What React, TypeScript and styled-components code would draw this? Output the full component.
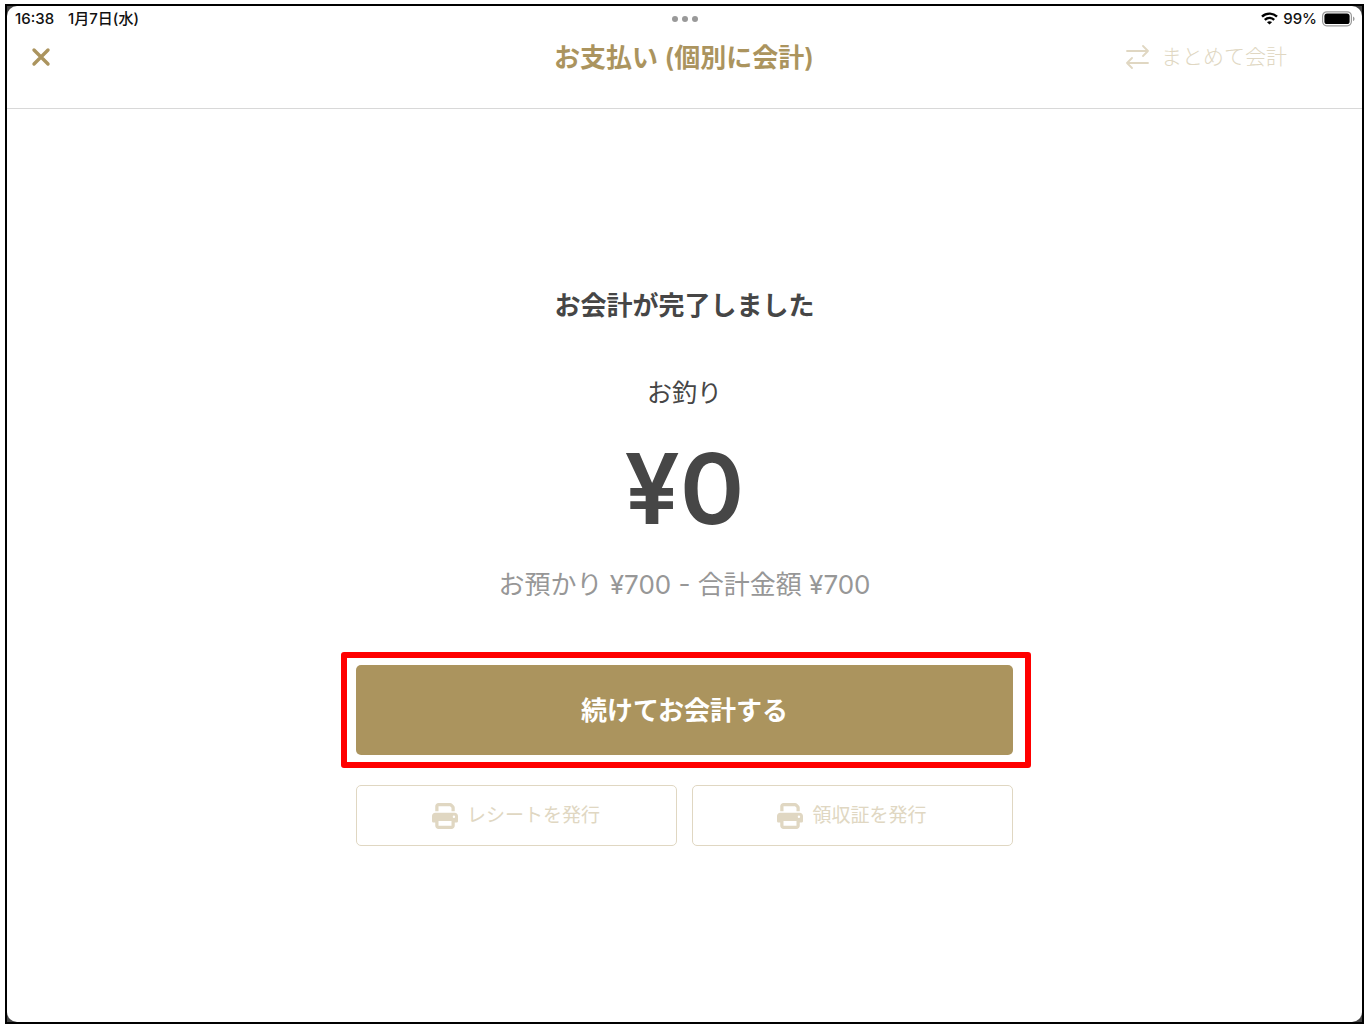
import React from "react";
import styled, { createGlobalStyle } from "styled-components";
import { FaPrint } from "react-icons/fa6";

const gold = "#ab945e";
const paleGold = "#e0d7c2";
const ink = "#464646";

const GlobalStyle = createGlobalStyle`
  *, *::before, *::after { box-sizing: border-box; }
  body {
    margin: 0;
    background: #fff;
    color: ${ink};
    font-family: Inter, "Noto Sans CJK JP", sans-serif;
  }
  button { font: inherit; cursor: pointer; }
  h1, h2, p { margin: 0; font-weight: 400; }
`;

const Page = styled.div`
  display: flex;
  min-height: 100vh;
  padding: 4px 7px 7px 5px;
`;

const Device = styled.div`
  flex: 1;
  display: flex;
  border: 2px solid #000;
  background: #444;
`;

const Screen = styled.div`
  flex: 1;
  display: flex;
  flex-direction: column;
  border-radius: 10px;
  background: #fff;
`;

const StatusBar = styled.div`
  display: grid;
  grid-template-columns: 1fr auto 1fr;
  align-items: center;
  height: 25px;
  padding: 0 7px 0 8px;
  color: #111;
  font-size: 15px;
  line-height: 24px;
  font-weight: 500;
`;

const StatusGroup = styled.div<{ $gap: number; $end?: boolean }>`
  display: flex;
  align-items: center;
  justify-content: ${(p) => (p.$end ? "flex-end" : "flex-start")};
  gap: ${(p) => p.$gap}px;
`;

const Dots = styled.div`
  display: flex;
  gap: 4px;
`;

const Dot = styled.span`
  width: 6px;
  height: 6px;
  border-radius: 50%;
  background: #999;
`;

const Header = styled.header`
  display: grid;
  grid-template-columns: 1fr auto 1fr;
  align-items: center;
  height: 78px;
  padding: 0 75px 25px 24px;
  border-bottom: 1px solid #d8d8d8;
`;

const CloseButton = styled.button`
  display: flex;
  justify-self: start;
  padding: 0;
  border: 0;
  background: none;
  color: ${gold};
`;

const Title = styled.h1`
  grid-column: 2;
  padding: 2px 0 0 50px;
  color: ${gold};
  font-size: 26px;
  line-height: 36px;
  font-weight: 600;
`;

const SwitchButton = styled.button`
  display: flex;
  justify-self: end;
  align-items: center;
  gap: 12px;
  padding: 0;
  border: 0;
  background: none;
  color: ${paleGold};
  font-size: 21px;
  line-height: 30px;
  font-weight: 300;
`;

const Main = styled.main`
  flex: 1;
  display: flex;
  flex-direction: column;
  align-items: center;
  padding: 179px 24px 48px;
  text-align: center;
`;

const Message = styled.h2`
  font-size: 26px;
  line-height: 36px;
  font-weight: 600;
`;

const ChangeLabel = styled.p`
  margin-top: 51px;
  font-size: 25px;
  line-height: 36px;
`;

const ChangeAmount = styled.p`
  margin-top: 24px;
  font-size: 98px;
  line-height: 108px;
  font-weight: 600;
`;

const Breakdown = styled.p`
  margin-top: 24px;
  color: #979797;
  font-size: 26px;
  line-height: 36px;
`;

const Actions = styled.div`
  display: flex;
  flex-direction: column;
  gap: 30px;
  width: 100%;
  max-width: 657px;
  margin-top: 62px;
`;

const Highlighted = styled.div`
  position: relative;
  display: flex;

  &::after {
    content: "";
    position: absolute;
    inset: -13px -18px -13px -15px;
    border: 6px solid #f00;
    border-radius: 3px;
    pointer-events: none;
  }
`;

const PrimaryButton = styled.button`
  flex: 1;
  height: 90px;
  padding: 2px 0 0;
  border: 0;
  border-radius: 5px;
  background: ${gold};
  color: #fff;
  font-size: 26px;
  line-height: 36px;
  font-weight: 600;
`;

const SecondaryRow = styled.div`
  display: flex;
  gap: 15px;
`;

const SecondaryButton = styled.button`
  flex: 1;
  display: flex;
  align-items: center;
  justify-content: center;
  gap: 9px;
  height: 61px;
  padding: 0 1px 0 0;
  border: 1px solid ${paleGold};
  border-radius: 5px;
  background: #fff;
  color: ${paleGold};
  font-size: 19px;
  line-height: 28px;
`;

const CloseIcon = () => (
  <svg width="20" height="20" viewBox="0 0 20 20" fill="none" stroke="currentColor" strokeWidth="3.4" strokeLinecap="round" aria-hidden="true">
    <path d="M3 3 17 17M17 3 3 17" />
  </svg>
);

const SwapIcon = () => (
  <svg width="24" height="24" viewBox="0 0 24 24" fill="none" stroke="currentColor" strokeWidth="1.8" strokeLinecap="round" strokeLinejoin="round" aria-hidden="true">
    <path d="M2 6H23M18 1 23 6 18 11M23 18H2M7 13 2 18 7 23" />
  </svg>
);

const WifiIcon = () => (
  <svg width="17" height="13" viewBox="0 0 17 13" fill="none" stroke="#000" strokeWidth="2.4" aria-hidden="true">
    <path d="M1 4.600C5.200.6 11.800.6 16 4.600M3.800 7.800C6.500 5.300 10.500 5.300 13.200 7.800" />
    <path d="M8.500 12.600 6 10.200C7.400 8.900 9.600 8.900 11 10.200Z" fill="#000" stroke="none" />
  </svg>
);

const BatteryIcon = () => (
  <svg width="33" height="16" viewBox="0 0 33 16" aria-hidden="true">
    <rect x="0.600" y="0.800" width="28.800" height="14" rx="4.200" fill="none" stroke="#999" strokeWidth="1.200" />
    <rect x="2.400" y="2.600" width="25.200" height="10.400" rx="2.600" fill="#000" />
    <path d="M31 5.500C33 6.300 33 9.300 31 10.100Z" fill="#999" />
  </svg>
);

export default function App() {
  return (
    <>
      <GlobalStyle />
      <Page>
        <Device>
          <Screen>
            <StatusBar>
              <StatusGroup $gap={14}>
                <span>16:38</span>
                <span>1月7日(水)</span>
              </StatusGroup>
              <Dots>
                <Dot />
                <Dot />
                <Dot />
              </Dots>
              <StatusGroup $gap={5} $end>
                <WifiIcon />
                <span>99%</span>
                <BatteryIcon />
              </StatusGroup>
            </StatusBar>
            <Header>
              <CloseButton type="button" aria-label="閉じる">
                <CloseIcon />
              </CloseButton>
              <Title>お支払い (個別に会計)</Title>
              <SwitchButton type="button">
                <SwapIcon />
                まとめて会計
              </SwitchButton>
            </Header>
            <Main>
              <Message>お会計が完了しました</Message>
              <ChangeLabel>お釣り</ChangeLabel>
              <ChangeAmount>¥0</ChangeAmount>
              <Breakdown>お預かり ¥700 - 合計金額 ¥700</Breakdown>
              <Actions>
                <Highlighted>
                  <PrimaryButton type="button">続けてお会計する</PrimaryButton>
                </Highlighted>
                <SecondaryRow>
                  <SecondaryButton type="button">
                    <FaPrint size={26} aria-hidden="true" />
                    レシートを発行
                  </SecondaryButton>
                  <SecondaryButton type="button">
                    <FaPrint size={26} aria-hidden="true" />
                    領収証を発行
                  </SecondaryButton>
                </SecondaryRow>
              </Actions>
            </Main>
          </Screen>
        </Device>
      </Page>
    </>
  );
}
